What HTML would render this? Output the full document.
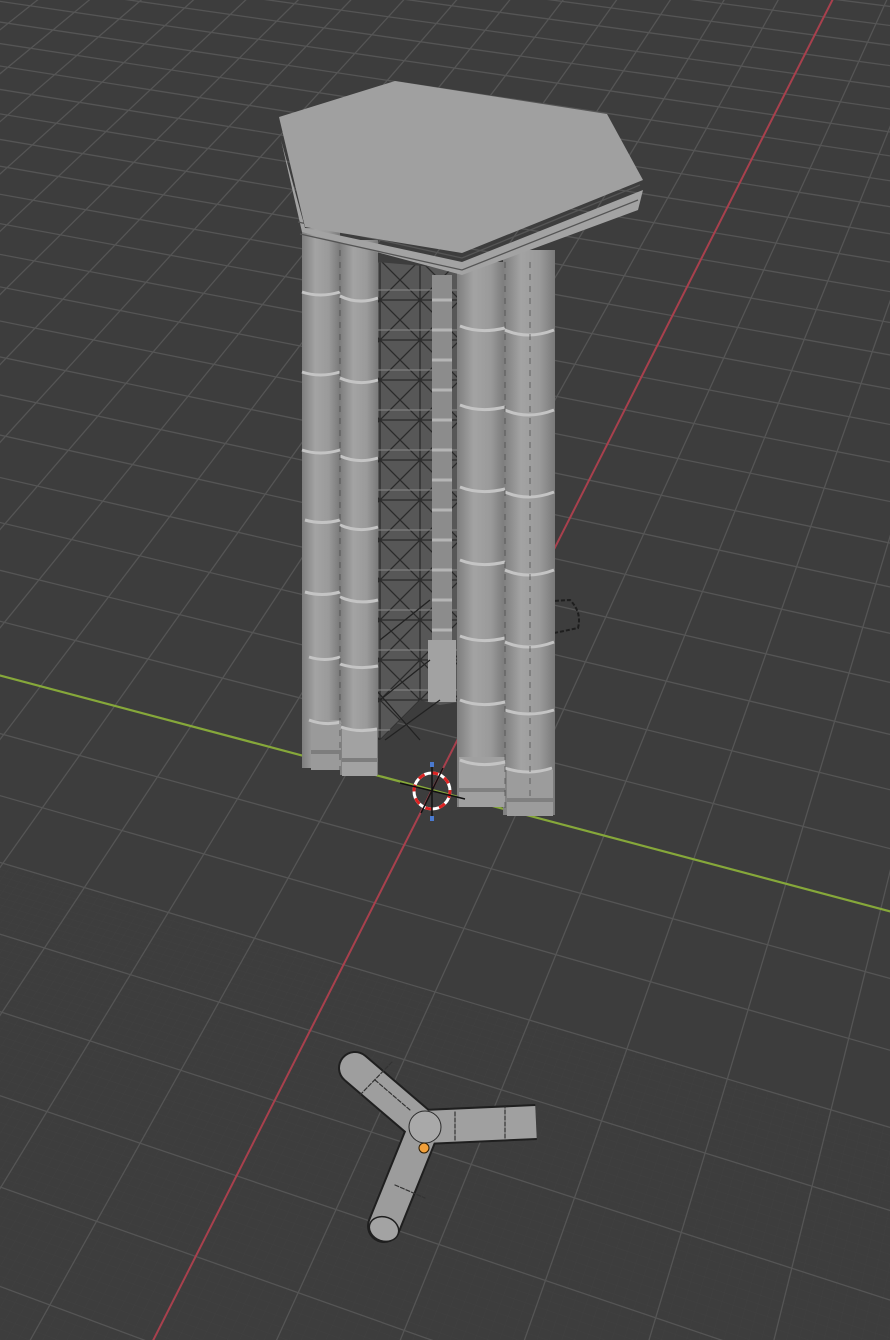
<!DOCTYPE html>
<html><head><meta charset="utf-8"><style>
html,body{margin:0;padding:0;background:#3d3d3d;width:890px;height:1340px;overflow:hidden}
svg{display:block}
</style></head><body>
<svg id="s" width="890" height="1340" viewBox="0 0 890 1340" xmlns="http://www.w3.org/2000/svg">
<defs>
<linearGradient id="col" x1="0" x2="1" y1="0" y2="0">
<stop offset="0" stop-color="#7e7e7e"/><stop offset="0.35" stop-color="#a3a3a3"/><stop offset="0.7" stop-color="#9a9a9a"/><stop offset="1" stop-color="#7a7a7a"/>
</linearGradient>
<pattern id="truss" width="40" height="40" patternUnits="userSpaceOnUse">
<rect width="40" height="40" fill="#575757"/>
<path d="M0 0L40 40M40 0L0 40M0 20H40M20 0V40" stroke="#2a2a2a" stroke-width="1.3"/>
<path d="M0 10H40" stroke="#8a8a8a" stroke-width="1"/>
</pattern>
</defs>
<rect width="890" height="1340" fill="#3d3d3d"/>
<g id="sub" stroke="#414141" stroke-width="0.6"></g>
<g id="grid" stroke="#555" stroke-width="1.3"></g>
<g id="axes"></g>

<g>
<polygon points="376,262 470,270 470,700 440,705 420,700 400,720 380,740 376,740" fill="url(#truss)"/>
<rect x="432" y="275" width="20" height="420" fill="#8c8c8c"/>
<path d="M432 300H452M432 330H452M432 360H452M432 390H452M432 420H452M432 450H452M432 480H452M432 510H452M432 540H452M432 570H452M432 600H452M432 630H452" stroke="#b5b5b5" stroke-width="3"/>
<rect x="428" y="640" width="28" height="62" fill="#a2a2a2"/>
<path d="M380 640L430 600M380 700L430 660M376 690L420 740M385 740L440 700" stroke="#222" stroke-width="1.3"/>
<path d="M537 602L570 600Q582 612 578 628L540 636" fill="none" stroke="#1e1e1e" stroke-width="2" stroke-dasharray="4 2"/>
<rect x="302" y="228" width="38" height="540" fill="url(#col)"/>
<rect x="340" y="240" width="38" height="535" fill="url(#col)"/>
<rect x="311" y="720" width="30" height="50" fill="#9a9a9a"/>
<rect x="342" y="728" width="35" height="48" fill="#a2a2a2"/>
<path d="M311 752H341M342 760H377" stroke="#7d7d7d" stroke-width="4"/>
<rect x="457" y="262" width="48" height="545" fill="url(#col)"/>
<rect x="503" y="250" width="52" height="565" fill="url(#col)"/>
<rect x="459" y="757" width="46" height="50" fill="#a0a0a0"/>
<rect x="507" y="770" width="46" height="46" fill="#9c9c9c"/>
<path d="M459 790H505M507 800H553" stroke="#808080" stroke-width="4"/>
<g fill="none" stroke="#c4c4c4" stroke-width="3">
<path d="M302 292Q320 298 340 292M340 296Q358 305 378 298"/>
<path d="M302 372Q320 378 340 372M340 378Q358 386 378 380"/>
<path d="M302 450Q320 456 340 450M340 456Q358 464 378 458"/>
<path d="M305 520Q322 525 340 520M340 525Q358 533 378 527"/>
<path d="M305 592Q322 597 340 592M340 597Q358 605 378 600"/>
<path d="M309 657Q325 662 340 657M340 664Q358 670 378 666"/>
<path d="M309 720Q325 726 341 722M341 727Q358 733 377 729"/>
<path d="M460 326Q480 334 505 328M505 330Q528 340 554 330"/>
<path d="M460 405Q480 413 505 407M505 410Q528 420 554 410"/>
<path d="M460 487Q480 495 505 489M505 492Q528 502 554 492"/>
<path d="M460 560Q480 568 505 562M505 570Q528 580 554 570"/>
<path d="M460 636Q480 644 505 638M505 642Q528 652 554 642"/>
<path d="M460 700Q480 708 505 702M505 710Q528 718 554 710"/>
<path d="M460 760Q480 768 505 762M505 768Q528 776 552 768"/>
</g>
<g stroke="#3a3a3a" stroke-width="1" stroke-dasharray="6 6" fill="none" opacity="0.6">
<path d="M340 250V770M505 262V810M530 262V800"/>
</g>
<polygon points="281,140 302,232 462,275 638,210 643,190 462,262 305,228" fill="#a3a3a3"/>
<path d="M298 222L462 258L640 185" fill="none" stroke="#555" stroke-width="1.3"/>
<path d="M300 234L462 270L638 200" fill="none" stroke="#555" stroke-width="1.3"/>
<polygon points="279,117 395,81 607,114 643,180 462,253 305,227" fill="#a0a0a0"/>
</g>

<g>
<circle cx="432" cy="791" r="18" fill="none" stroke="#fff" stroke-width="3"/>
<circle cx="432" cy="791" r="18" fill="none" stroke="#d22" stroke-width="3" stroke-dasharray="7 7"/>
<path d="M400 783L465 799M421 813L443 768M432 763V818" stroke="#111" stroke-width="1.5"/>
<rect x="430" y="762" width="4" height="5" fill="#4a7ad0"/>
<rect x="430" y="816" width="4" height="5" fill="#4a7ad0"/>
</g>

<g stroke-linecap="round">
<line x1="355" y1="1068" x2="424" y2="1127" stroke="#1f1f1f" stroke-width="34"/>
<line x1="424" y1="1127" x2="536" y2="1122" stroke="#1f1f1f" stroke-width="36" stroke-linecap="butt"/>
<line x1="424" y1="1127" x2="384" y2="1226" stroke="#1f1f1f" stroke-width="34"/>
<line x1="355" y1="1068" x2="424" y2="1127" stroke="#9e9e9e" stroke-width="30"/>
<line x1="424" y1="1127" x2="536" y2="1122" stroke="#a0a0a0" stroke-width="32" stroke-linecap="butt"/>
<line x1="424" y1="1127" x2="384" y2="1226" stroke="#9c9c9c" stroke-width="30"/>
<circle cx="425" cy="1127" r="16" fill="#a9a9a9" stroke="#2a2a2a" stroke-width="1"/>
<ellipse cx="384" cy="1229" rx="15" ry="12" fill="#a3a3a3" stroke="#1f1f1f" stroke-width="1.5" transform="rotate(20 384 1229)"/>
<path d="M375 1080L410 1110M360 1095L392 1062M455 1140L455 1110M505 1138L505 1107M395 1185L425 1198" stroke="#333" stroke-width="1.2" stroke-dasharray="4 2"/>
</g>
<circle cx="424" cy="1148" r="5" fill="#f2a03a" stroke="#2a1a00" stroke-width="1"/>
</svg>
<script>
(function(){
var a=0.0288,b=0.01364,V1=[1368,-1057],V2=[-5700,-835],O=[432,790];
function P(X,Y){var w=1+a*X+b*Y;return[(a*X*V1[0]+b*Y*V2[0]+O[0])/w,(a*X*V1[1]+b*Y*V2[1]+O[1])/w];}
var NS="http://www.w3.org/2000/svg";
function line(g,p,q,c,wd){var l=document.createElementNS(NS,"line");l.setAttribute("x1",p[0].toFixed(1));l.setAttribute("y1",p[1].toFixed(1));l.setAttribute("x2",q[0].toFixed(1));l.setAttribute("y2",q[1].toFixed(1));if(c)l.setAttribute("stroke",c);if(wd)l.setAttribute("stroke-width",wd);g.appendChild(l);}
var g=document.getElementById("grid"),sg=document.getElementById("sub"),ax=document.getElementById("axes");
function draw(gr,step,Xmin,Xmax,Ymin,Ymax,skipMajor){
 for(var X=Xmin;X<=Xmax+1e-9;X+=step){
  if(skipMajor&&Math.abs(X-Math.round(X))<1e-6)continue;
  var y0=Math.max(Ymin,(0.04-1-a*X)/b);
  line(gr,P(X,y0),P(X,Ymax));
 }
 for(var Y=Ymin;Y<=Ymax+1e-9;Y+=step){
  if(skipMajor&&Math.abs(Y-Math.round(Y))<1e-6)continue;
  var x0=Math.max(Xmin,(0.04-1-b*Y)/a);
  line(gr,P(x0,Y),P(Xmax,Y));
 }
}
draw(sg,0.1,-12,-3,-12,12,true);
draw(g,1,-14,40,-45,45,false);
line(ax,P(0,(0.04-1)/b),P(0,60),"#86a83a",2.2);
line(ax,P(-20,0),P(40,0),"#a8404d",2);
})();
</script>
</body></html>
